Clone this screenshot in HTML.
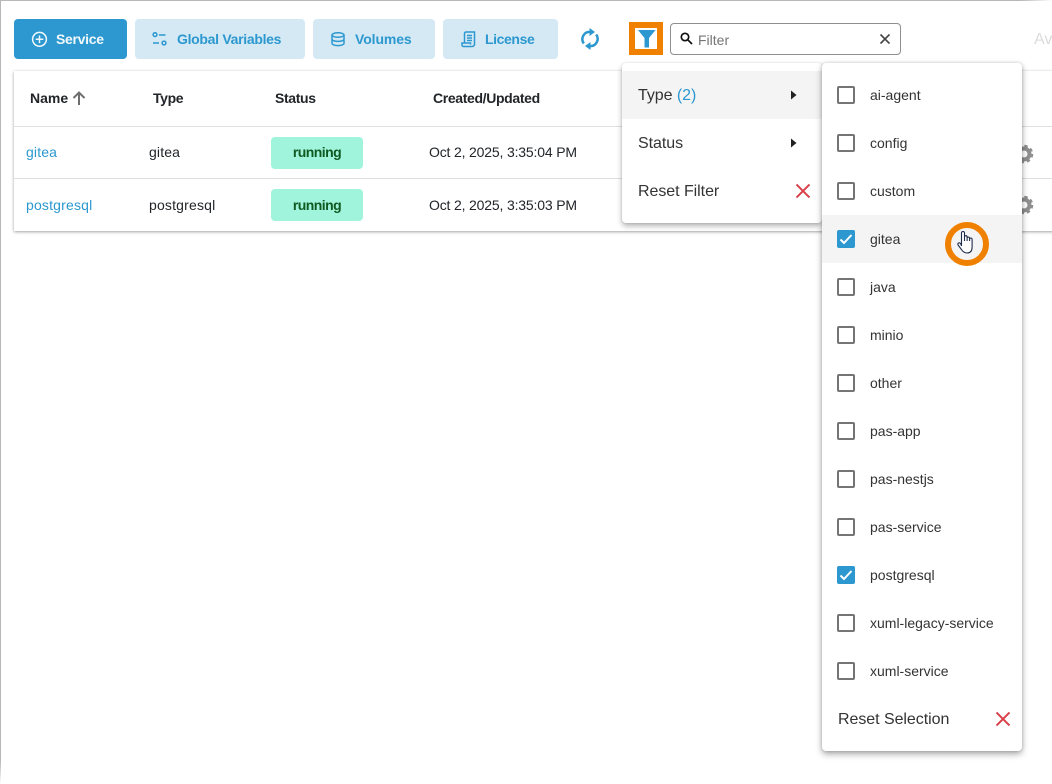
<!DOCTYPE html>
<html><head><meta charset="utf-8"><style>
html,body{margin:0;padding:0;background:#fff}
#r{position:relative;width:1052px;height:784px;overflow:hidden;background:#fff;font-family:"Liberation Sans",sans-serif;color:#212529;font-size:14px}
.a{position:absolute;white-space:nowrap}
.t{position:absolute;white-space:nowrap;line-height:20px}
.btn{position:absolute;top:19px;height:40px;border-radius:4px;background:#d4e9f4}
.bl{position:absolute;top:29px;line-height:20px;font-weight:bold;font-size:14px;color:#2c98cf;white-space:nowrap}
.hd{position:absolute;top:88px;line-height:20px;font-weight:bold;font-size:14px;color:#212529;white-space:nowrap;letter-spacing:-.35px}
.cb{position:absolute;left:837px;width:14px;height:14px;border:2px solid #757575;border-radius:2px;background:#fff}
.ck{position:absolute;left:837px;width:18px;height:18px;background:#2c98cf;border-radius:2px}
.lb{position:absolute;left:870px;line-height:20px;font-size:14px;color:#333;white-space:nowrap}
.m{position:absolute;font-size:16px;line-height:20px;color:#333;white-space:nowrap;letter-spacing:-.05px}
.run{position:absolute;left:271px;width:92px;height:32px;background:#a1f4dc;border-radius:4px;text-align:center;font-weight:bold;color:#0e5a22;font-size:14px;letter-spacing:-.55px}
</style></head><body><div id="r">
<div class="a" style="left:0;top:0;width:1052px;height:1px;background:linear-gradient(90deg,#b8b8b8 0,#b8b8b8 97%,#fff 100%)"></div>
<div class="a" style="left:0;top:0;width:1px;height:784px;background:linear-gradient(180deg,#b8b8b8 0,#b8b8b8 97%,#fff 100%)"></div>

<div class="btn" style="left:14px;width:113px;background:#2c98cf"></div>
<svg class="a" style="left:31px;top:31px" width="17" height="17" viewBox="0 0 17 17" fill="none" stroke="#f0f8fc" stroke-width="1.500"><circle cx="8.500" cy="8.300" r="6.900"/><path d="M8.500 4.500v7.600M4.700 8.300h7.600"/></svg>
<div class="bl" style="left:56px;color:#f0f8fc;letter-spacing:-.3px">Service</div>

<div class="btn" style="left:135px;width:170px"></div>
<svg class="a" style="left:152px;top:32px" width="16" height="14" viewBox="0 0 16 14" fill="none" stroke="#2c98cf" stroke-width="1.500"><circle cx="3" cy="2.600" r="1.900"/><path d="M7 3h6.500"/><path d="M1 11h6"/><circle cx="12" cy="11" r="1.900"/></svg>
<div class="bl" style="left:177px;letter-spacing:-.3px">Global Variables</div>

<div class="btn" style="left:313px;width:122px"></div>
<svg class="a" style="left:331px;top:32px" width="14" height="15" viewBox="0 0 14 15" fill="none" stroke="#2c98cf" stroke-width="1.500"><ellipse cx="7" cy="3" rx="6" ry="2.200"/><path d="M1 3v8.400c0 1.200 2.700 2.200 6 2.200s6-1 6-2.200V3M1 7.200c0 1.200 2.700 2.200 6 2.200s6-1 6-2.200"/></svg>
<div class="bl" style="left:355px;letter-spacing:-.1px">Volumes</div>

<div class="btn" style="left:443px;width:115px"></div>
<svg class="a" style="left:461px;top:31px" width="15" height="17" viewBox="0 0 15 17" fill="none" stroke="#2c98cf" stroke-width="1.500"><path d="M3.500 12V2.500A1.500 1.500 0 0 1 5 1h8.500v11.500a2.500 2.500 0 0 1-2.500 3H2.500A1.500 1.500 0 0 1 1 14v-2h8.500v1.500"/><path d="M6 4.500h5M6 7h5M6 9.500h5"/></svg>
<div class="bl" style="left:485px;letter-spacing:-.4px">License</div>

<svg class="a" style="left:581px;top:28px" width="18" height="22" viewBox="0 0 18 22" fill="none" stroke="#2c98cf" stroke-width="2.500"><path d="M2.800 15.500A7.300 7.300 0 0 1 9 3.900"/><path d="M15.200 6.500A7.300 7.300 0 0 1 9 18.100"/><path d="M8.500 0l5.500 4-5.500 4z" fill="#2c98cf" stroke="none"/><path d="M9.500 14L4 18l5.500 4z" fill="#2c98cf" stroke="none"/></svg>

<div class="a" style="left:629px;top:22px;width:34px;height:33px;box-sizing:border-box;border:6px solid #f08000;background:#fff"></div>
<svg class="a" style="left:638px;top:30px" width="18" height="18" viewBox="0 0 18 18"><path d="M0 0h17.500L11 8v9.500H6.500V8z" fill="#2c98cf"/></svg>

<div class="a" style="left:670px;top:23px;width:231px;height:32px;box-sizing:border-box;border:1px solid #8f8f8f;border-radius:4px;background:#fff"></div>
<svg class="a" style="left:680px;top:32px" width="13" height="13" viewBox="0 0 13 13" fill="none" stroke="#111" stroke-width="1.700"><circle cx="5" cy="5" r="3.700"/><path d="M7.800 7.800L12 12"/></svg>
<div class="t" style="left:698px;top:30px;color:#757575;font-size:14px">Filter</div>
<svg class="a" style="left:879px;top:33px" width="12" height="12" viewBox="0 0 12 12" stroke="#444" stroke-width="1.600"><path d="M1.500 1.500l9 9M10.500 1.500l-9 9"/></svg>
<div class="t" style="left:1034px;top:30px;color:#dcdcdc;font-size:16px">Av</div>

<div class="a" style="left:14px;top:71px;width:1040px;height:160px;background:#fff;box-shadow:0 1px 3px rgba(0,0,0,.35),0 0 2px rgba(0,0,0,.06)"></div>
<div class="hd" style="left:30px;letter-spacing:0">Name</div>
<svg class="a" style="left:72px;top:91px" width="14" height="14" viewBox="0 0 14 14" fill="none" stroke="#6e6e6e" stroke-width="2"><path d="M7 14V2M1.500 7L7 1.500 12.500 7"/></svg>
<div class="hd" style="left:153px">Type</div>
<div class="hd" style="left:275px">Status</div>
<div class="hd" style="left:433px">Created/Updated</div>
<div class="a" style="left:14px;top:126px;width:1040px;height:1px;background:#e0e0e0"></div>
<div class="a" style="left:14px;top:178px;width:1040px;height:1px;background:#e0e0e0"></div>

<div class="t" style="left:26px;top:142px;color:#2c98cf;letter-spacing:.15px">gitea</div>
<div class="t" style="left:149px;top:142px;letter-spacing:.15px">gitea</div>
<div class="run" style="top:137px;line-height:31px">running</div>
<div class="t" style="left:429px;top:142px;letter-spacing:-.17px">Oct 2, 2025, 3:35:04 PM</div>

<div class="t" style="left:26px;top:195px;color:#2c98cf;letter-spacing:.18px">postgresql</div>
<div class="t" style="left:149px;top:195px;letter-spacing:.18px">postgresql</div>
<div class="run" style="top:189px;line-height:32px">running</div>
<div class="t" style="left:429px;top:195px;letter-spacing:-.17px">Oct 2, 2025, 3:35:03 PM</div>

<svg class="a" style="left:1014px;top:144px" width="20" height="20" viewBox="0 0 20 20" fill="none" stroke="#8e8e8e"><circle cx="10" cy="10" r="5.500" stroke-width="4"/><circle cx="10" cy="10" r="8" stroke-width="2.500" stroke-dasharray="3.300 3"/></svg>
<svg class="a" style="left:1014px;top:195px" width="20" height="20" viewBox="0 0 20 20" fill="none" stroke="#8e8e8e"><circle cx="10" cy="10" r="5.500" stroke-width="4"/><circle cx="10" cy="10" r="8" stroke-width="2.500" stroke-dasharray="3.300 3"/></svg>

<div class="a" style="left:622px;top:63px;width:200px;height:160px;background:#fff;border-radius:4px;box-shadow:0 3px 6px rgba(0,0,0,.3),0 0 2px rgba(0,0,0,.12)"></div>
<div class="a" style="left:622px;top:71px;width:200px;height:48px;background:#f4f4f4"></div>
<div class="m" style="left:638px;top:86px">Type <span style="color:#2c98cf">(2)</span></div>
<svg class="a" style="left:791px;top:90px" width="6" height="10"><path d="M0 .5l5.500 4.500-5.500 4.500z" fill="#222"/></svg>
<div class="m" style="left:638px;top:134px">Status</div>
<svg class="a" style="left:791px;top:138px" width="6" height="10"><path d="M0 .5l5.500 4.500-5.500 4.500z" fill="#222"/></svg>
<div class="m" style="left:638px;top:182px">Reset Filter</div>
<svg class="a" style="left:796px;top:184px" width="14" height="14" viewBox="0 0 14 14" stroke="#d9404a" stroke-width="2"><path d="M.500.5l13 13M13.500.5l-13 13"/></svg>

<div class="a" style="left:822px;top:63px;width:200px;height:688px;background:#fff;border-radius:4px;box-shadow:0 3px 7px rgba(0,0,0,.35),0 0 3px rgba(0,0,0,.15)"></div>
<div class="a" style="left:822px;top:215px;width:200px;height:48px;background:#f4f4f4"></div>

<div class="cb" style="top:86px"></div><div class="lb" style="top:85px">ai-agent</div>
<div class="cb" style="top:134px"></div><div class="lb" style="top:133px">config</div>
<div class="cb" style="top:182px"></div><div class="lb" style="top:181px">custom</div>
<div class="ck" style="top:230px"></div><svg class="a" style="left:839px;top:233px" width="14" height="12" viewBox="0 0 14 12" fill="none" stroke="#fff" stroke-width="2"><path d="M1.500 6.500l3.500 3.500 7.500-8"/></svg><div class="lb" style="top:229px">gitea</div>
<div class="cb" style="top:278px"></div><div class="lb" style="top:277px">java</div>
<div class="cb" style="top:326px"></div><div class="lb" style="top:325px">minio</div>
<div class="cb" style="top:374px"></div><div class="lb" style="top:373px">other</div>
<div class="cb" style="top:422px"></div><div class="lb" style="top:421px">pas-app</div>
<div class="cb" style="top:470px"></div><div class="lb" style="top:469px">pas-nestjs</div>
<div class="cb" style="top:518px"></div><div class="lb" style="top:517px">pas-service</div>
<div class="ck" style="top:566px"></div><svg class="a" style="left:839px;top:569px" width="14" height="12" viewBox="0 0 14 12" fill="none" stroke="#fff" stroke-width="2"><path d="M1.500 6.500l3.500 3.500 7.500-8"/></svg><div class="lb" style="top:565px">postgresql</div>
<div class="cb" style="top:614px"></div><div class="lb" style="top:613px">xuml-legacy-service</div>
<div class="cb" style="top:662px"></div><div class="lb" style="top:661px">xuml-service</div>
<div class="m" style="left:838px;top:710px">Reset Selection</div>
<svg class="a" style="left:996px;top:712px" width="14" height="14" viewBox="0 0 14 14" stroke="#d9404a" stroke-width="2"><path d="M.500.5l13 13M13.500.5l-13 13"/></svg>

<div class="a" style="left:945px;top:222px;width:44px;height:44px;box-sizing:border-box;border:6px solid #f08000;border-radius:50%"></div>
<svg class="a" style="left:956px;top:230px" width="20" height="26" viewBox="0 0 20 26"><path d="M5.500 16V3a1.500 1.500 0 0 1 3 0v8V7a1.300 1.300 0 0 1 2.600 0v4-3a1.300 1.300 0 0 1 2.500 0v3-2a1.300 1.300 0 0 1 2.500 0v8c0 3.500-1.500 6-5 6-3 0-4.500-1.500-6-4l-3-4c-1-1.500 1-3 2.500-1.500z" fill="#fff" stroke="#1e2a4a" stroke-width="1.100"/></svg>
</div></body></html>
